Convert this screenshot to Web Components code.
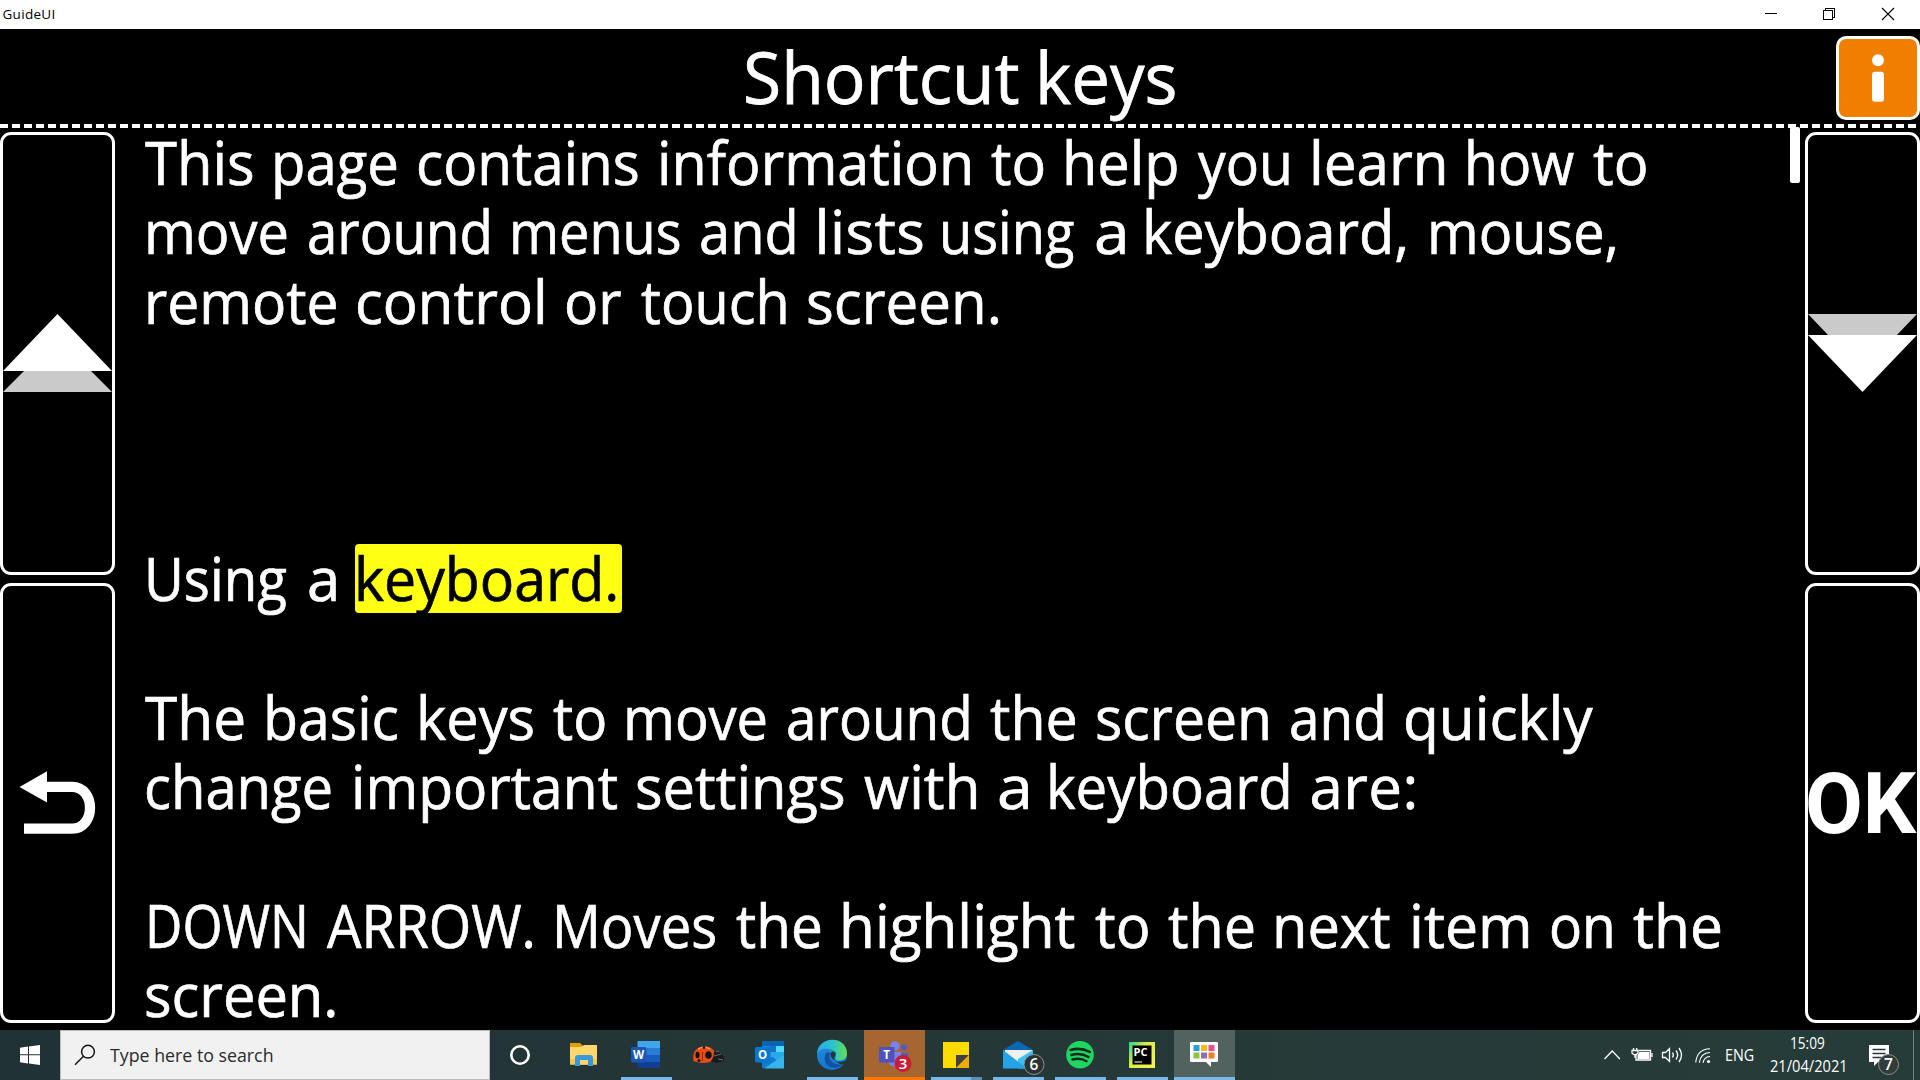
<!DOCTYPE html>
<html lang="en">
<head>
<meta charset="utf-8">
<title>GuideUI</title>
<style>
html,body{margin:0;height:100%;background:#000;overflow:hidden}
body{font-family:"Open Sans","Noto Sans",sans-serif}
</style>
</head>
<body>
<guide-app></guide-app>
<script>
const define=(name,html,setup)=>{
  const tpl=document.createElement('template');
  tpl.innerHTML=html;
  customElements.define(name,class extends HTMLElement{
    constructor(){super();this.attachShadow({mode:'open'}).append(tpl.content.cloneNode(true));}
    connectedCallback(){if(setup)setup(this,this.shadowRoot);}
  });
};

const ctx=document.createElement('canvas').getContext('2d');
/* Gives a span the wanted ink width: tracks it out, or condenses it when it is too wide. */
const fit=(span,text,w,cs)=>{
  ctx.font=`${cs.fontWeight} ${cs.fontSize} ${cs.fontFamily}`;
  const m=ctx.measureText(text),left=m.actualBoundingBoxLeft,ink=left+m.actualBoundingBoxRight;
  if(w>ink&&text.length>1){
    span.style.letterSpacing=(w-ink)/(text.length-1)+'px';
    span.style.marginLeft=left+'px';
  }else{
    const k=w/ink;
    span.style.transform=`scaleX(${k})`;
    span.style.transformOrigin='0 0';
    span.style.marginLeft=left*k+'px';
  }
};
define('fit-text',`<style>:host{display:block;flex:none;white-space:pre;font-variant-ligatures:none}span{display:inline-block}</style><span><slot></slot></span>`,(el,root)=>{
  const w=+el.getAttribute('w');
  el.style.width=w+'px';
  fit(root.querySelector('span'),el.textContent,w,getComputedStyle(el));
});

/* Space between two words: a base gap plus the side bearings of the letters that face it. */
const gap=(a,b)=>18+(/[nmuhdNl.,:]$/.test(a)?3.5:/[oescgp]$/.test(a)?2:1)+(/^[lhkmnrbpiDMU]/.test(b)?3.5:/^[aoecqsg]/.test(b)?1.8:.8);

/* A line of words on tab stops: "at" lists where each word starts and where the last one ends. */
define('word-line',`<style>:host{display:flex;height:69.333px;line-height:68px;white-space:pre;font-variant-ligatures:none}div{flex:none}span{display:inline-block}</style>`,(el,root)=>{
  const at=el.getAttribute('at').split(' ').map(Number),words=el.textContent.split(' '),cs=getComputedStyle(el);
  el.style.marginLeft=at[0]-145+'px';
  words.forEach((word,i)=>{
    const last=i===words.length-1,box=document.createElement('div'),span=document.createElement('span');
    box.style.width=at[i+1]-at[i]+'px';
    span.textContent=word;
    fit(span,word,at[i+1]-at[i]-(last?0:gap(word,words[i+1])),cs);
    box.append(span,last?'':' ');
    root.append(box);
  });
});

define('title-bar',`<style>
:host{display:flex;height:29px;flex:none;background:#fff;color:#000;align-items:center;justify-content:space-between;font-size:13.500px}
fit-text{margin-left:2.5px;line-height:29px}
div{display:flex;width:177px}svg{display:block;width:59px;height:29px}
</style><fit-text w="52">GuideUI</fit-text><div>
<svg viewBox="0 0 59 29" fill="none" stroke="#000" shape-rendering="crispEdges"><path d="M22 13.5h12"/></svg>
<svg viewBox="0 0 59 29" fill="none" stroke="#000" shape-rendering="crispEdges"><path d="M21.5 10.500h9v9h-9zM23.500 10V8.500h9v9H31"/></svg>
<svg viewBox="0 0 59 29" fill="none" stroke="#000" stroke-width="1.1"><path d="M21 8l12 12M33 8L21 20"/></svg></div>`);

define('info-button',`<style>:host{display:block;width:84px;height:84px;box-sizing:border-box;border:3px solid #fff;border-radius:10px;background:#f07f00}
svg{display:block;width:78px;height:78px}</style>
<svg viewBox="0 0 78 78" fill="#fff"><circle cx="39" cy="21.200" r="6"/><rect x="33" y="32.700" width="12" height="30" rx="3"/></svg>`);

define('page-header',`<style>:host{display:flex;flex:none;height:95px;color:#fff}
h1{margin:0;font-weight:400;font-size:72px;line-height:95px;padding-left:745.500px;-webkit-text-stroke:.8px #fff}
info-button{margin:7.300px 0 0 auto}</style><h1><word-line style="line-height:95px;height:95px" at="145 440.500 575">Shortcut keys</word-line></h1><info-button></info-button>`);

define('dash-rule',`<style>:host{display:block;flex:none;height:4px;background:repeating-linear-gradient(90deg,#fff 0 8px,#000 8px 12px)}</style>`);

define('nav-key',`<style>:host{display:flex;align-items:center;justify-content:center;box-sizing:border-box;border:3px solid #fff;border-radius:11px;overflow:hidden}
::slotted(svg){display:block;flex:none}</style><slot></slot>`);

define('key-column',`<style>:host{display:flex;flex:none;width:115px;flex-direction:column;gap:8px;padding:4px 0 7px;box-sizing:border-box}
#a{height:442.500px;flex:none}#b{flex:1}
.ok{font:700 84.500px/84px Roboto,sans-serif;color:#fff}</style><nav-key id="a"></nav-key><nav-key id="b"></nav-key>`,(el,root)=>{
  const left=el.getAttribute('side')==='left',a=root.getElementById('a'),b=root.getElementById('b');
  a.innerHTML=left?`<svg width="109" height="78" viewBox="0 0 109 78"><path fill="#cacaca" d="M0 78L21 57H88L109 78z"/><path fill="#fff" d="M0 57L54.500 0 109 57z"/></svg>`
    :`<svg width="109" height="78" viewBox="0 0 109 78"><path fill="#cacaca" d="M0 0H109L88 22H21z"/><path fill="#fff" d="M0 21H109L54.500 78z"/></svg>`;
  b.innerHTML=left?`<svg width="109" height="63" viewBox="3 771.700 109 63"><path fill="#fff" d="M19.500 787.700L47 772v31.300z"/><path d="M46 787.500H72C96 787.500 96 829.400 72 829.400H24" fill="none" stroke="#fff" stroke-width="10.300"/></svg>`
    :`<fit-text style="font:700 84.500px/84px Roboto,sans-serif;color:#fff;margin-top:4px" w="109.500">OK</fit-text>`;
});

define('mark-word',`<style>:host{display:block;box-sizing:border-box;width:267px;height:69.333px;padding-left:3.700px;border-radius:4px;background:#ffff14;color:#000;-webkit-text-stroke-color:#000}
fit-text{line-height:68px}</style><fit-text w="257">keyboard.</fit-text>`);

define('guide-text',`<style>:host{display:block;flex:1;min-height:0;padding-left:30px;font-size:60px;line-height:69.333px;color:#fff;-webkit-text-stroke:.7px #fff}
p{margin:0 0 69.333px}p.far{margin-bottom:208px}.r{display:flex;height:69.333px}
mark-word{margin-left:19.500px}</style>
<p class="far"><word-line at="145.3 276 418.400 660.400 991.400 1067 1198 1313.500 1468.600 1593.500 1646">This page contains information to help you learn how to</word-line>
<word-line at="149 308.600 513.500 701 819.600 943 1096 1147.300 1431.400 1615.500">move around menus and lists using a keyboard, mouse,</word-line>
<word-line at="149 358 567 641 808.600 998">remote control or touch screen.</word-line></p>
<p><span class="r"><word-line at="149 308.600 335.500">Using a</word-line><mark-word></mark-word></span></p>
<p><word-line at="145.300 267.300 420.400 553 627.800 787.500 990.500 1097.500 1290.500 1405.500 1593">The basic keys to move around the screen and quickly</word-line>
<word-line at="147 354.300 638 864 999 1050.500 1311.500 1414.500">change important settings with a keyboard are:</word-line></p>
<p><word-line at="149 326.500 557 736 843.700 1094.700 1168 1277 1413 1551.500 1633.500 1720.700">DOWN ARROW. Moves the highlight to the next item on the</word-line>
<word-line at="147 335">screen.</word-line></p>`);

define('scroll-thumb',`<style>:host{display:block;flex:none;width:10.500px;height:56px;margin:-1px 5px 0 0;border-radius:2px;background:#fff}</style>`);

define('task-button',`<style>:host{display:block;position:relative;flex:none;width:61px;height:50px;margin-right:1px}
:host([active]){background:#51625f}:host([alert]){background:#a56632}
:host([open])::after{content:"";position:absolute;left:5px;right:5px;bottom:0;height:3px;background:#76b9ed}
:host([active])::after{left:0;right:0}:host([alert])::after{left:0;right:0;background:#ff7600}
:host([stack])::after{background:linear-gradient(90deg,#76b9ed 40px,#5c8fb7 40px)}
::slotted(svg){display:block}</style><slot></slot>`);

define('search-box',`<style>:host{display:flex;box-sizing:border-box;width:430px;height:50px;background:#f1f1f1;border:1px solid #b9bcbc;font-size:18px;color:#2b2b2b;line-height:48px}
svg{width:22px;height:22px;margin:13px 14px 0 13px}</style>
<svg viewBox="0 0 22 22" fill="none" stroke="#111" stroke-width="1.500"><circle cx="14" cy="7.700" r="6.400"/><path d="M9.500 12.300L1 20.800"/></svg><fit-text w="162.500">Type here to search</fit-text>`);

define('tray-area',`<style>:host{display:flex;margin-left:auto;width:316px;height:50px;color:#fff;font-size:15.500px;flex:none}
svg{display:block;flex:none}.e{margin-left:6px;line-height:50px}.d{width:75px;margin-left:16px;display:flex;flex-direction:column;padding-top:2px;line-height:23px}
.d :first-child{margin-left:21px}</style>
<svg width="116" height="50" viewBox="1604 1030 116 50" fill="none" stroke="#fff" stroke-width="1.300">
<path d="M1604.500 1059l7.700-8 7.700 8"/>
<path d="M1638.500 1050.500H1650.500V1060H1636V1054"/><path d="M1639.500 1052H1649.500V1059H1637.500V1055.500z" fill="#fff" stroke="none"/><path d="M1652 1053v4M1632 1050.500h6v2.500q-3 3.500-6 0zM1633.500 1048v2.500M1636.700 1048v2.500M1635 1054v4"/>
<path d="M1662.500 1052.500h3l4-4v13l-4-4h-3zM1672.500 1052.500q1.700 2.500 0 5M1676 1050.500q3.300 4.500 0 9M1679 1048q5 7 0 14"/>
<path d="M1695.700 1062.500Q1697 1049 1710 1048.700M1699.300 1062.800Q1700.500 1053 1710 1052.500M1703 1062.800Q1704 1057 1710 1056.500" stroke-width="1.100"/><circle cx="1708.500" cy="1061.500" r="1.600" fill="#fff" stroke="none"/></svg>
<fit-text class="e" w="28">ENG</fit-text>
<div class="d"><fit-text w="34">15:09</fit-text><fit-text w="75">21/04/2021</fit-text></div>
<svg style="margin-left:19px" width="50" height="50" viewBox="1864 1030 50 50"><path fill="#fff" d="M1869 1045h20v17h-11l-4 4v-4h-5z"/><path d="M1872.500 1049.500h13M1872.500 1053.500h13M1872.500 1057.500h9" stroke="#273b39" stroke-width="1.300"/><circle cx="1888.500" cy="1064.500" r="10" fill="#343b3b" stroke="#87908f"/><text x="1888.500" y="1070" text-anchor="middle" font-size="15.500" font-weight="600" fill="#fff">7</text><path d="M1913.700 1030v50" stroke="#82908e"/></svg>`);

define('task-bar',`<style>:host{display:flex;flex:none;height:50px;background:linear-gradient(90deg,#203236,#243636 40%,#263b39 75%,#263c39);font-family:"Open Sans","Noto Sans",sans-serif}
.s{display:block;width:60px;height:50px}.apps{display:flex;margin-left:2px}svg{display:block}</style>
<svg class="s" viewBox="0 0 60 50" fill="#fff"><path d="M20 17.800l8-1.200V24.300h-8zM29 16.500l11-1.500v9.300H29zM20 25.300h8v8.200l-8-1.200zM29 25.300h11V35l-11-1.400z"/></svg>
<search-box></search-box><div class="apps">
<task-button><svg width="61" height="50"><circle cx="28" cy="25" r="8.700" fill="none" stroke="#fff" stroke-width="2.600"/></svg></task-button>
<task-button><svg width="61" height="50"><path d="M16 13h10l3 3v3H16z" fill="#dfa000"/><path d="M16 17h11l3-2h13v19.500H16z" fill="#ffd76b"/><path d="M16 29h27v5.500H16z" fill="#f7c64d"/><path d="M21 36v-8q0-3 3-3h12q3 0 3 3v8h-5v-6h-8v6z" fill="#3b96dc"/><path d="M26 30h8v4.500h-8z" fill="#ffd76b"/></svg></task-button>
<task-button open><svg width="61" height="50"><path d="M21.500 11H44v7H21.500z" fill="#41a5ee"/><path d="M21.500 18H44v7H21.500z" fill="#2b7cd3"/><path d="M21.500 25H44v7H21.500z" fill="#185abd"/><path d="M21.500 32H44v6H21.500z" fill="#103f91"/><rect x="15" y="17" width="15.500" height="15.500" rx="1.500" fill="#1b56b5"/><text x="22.500" y="29" text-anchor="middle" font-size="11.500" font-weight="700" fill="#fff">W</text></svg></task-button>
<task-button><svg width="61" height="50"><path d="M33 31q0-9 7-10l5 5q3 5-1 6l-6 1z" fill="#181b1b"/><path d="M38 22l3-1M36 26l7-2M40 29l5 1" stroke="#6b7170" fill="none"/><path d="M15.300 31Q14 21 21 17.500Q30 14 36 20.500Q36.500 28 32 32Q24 34.500 15.300 31z" fill="#e64f10"/><path d="M20 19q6-3.500 12 0" fill="none" stroke="#ff9b6b" stroke-width="1.200"/><ellipse cx="19.500" cy="25" rx="2" ry="3.200" fill="#111"/><ellipse cx="30.500" cy="25" rx="3.200" ry="3.800" fill="#111"/><path d="M24.500 22v9" stroke="#8b2c08"/><circle cx="26" cy="17.500" r="1.300" fill="#26100a"/><circle cx="21" cy="30.500" r="1.500" fill="#111"/></svg></task-button>
<task-button><svg width="61" height="50"><path d="M22 11h22v27H22z" fill="#1490df"/><path d="M22 11h22v5H22z" fill="#0a64b4"/><path d="M29 16h7v9h-7z" fill="#1473c9"/><path d="M36 16h8v6h-8z" fill="#50d9ff"/><path d="M29 22h15v8H29z" fill="#28a8ea"/><path d="M22 30l11-3 11 11H22z" fill="#0f7bd5"/><path d="M44 25L24 38.500h20z" fill="#35b4ec"/><rect x="15" y="17" width="15.500" height="15.500" rx="1.500" fill="#0878cf"/><text x="22.700" y="29" text-anchor="middle" font-size="11.500" font-weight="700" fill="#fff">O</text></svg></task-button>
<task-button open><svg width="61" height="50"><defs><linearGradient id="g"><stop stop-color="#29a9ef"/><stop offset=".55" stop-color="#2cc4c9"/><stop offset="1" stop-color="#67df49"/></linearGradient><linearGradient id="h" x2="0" y2="1"><stop stop-color="#1f90dd"/><stop offset="1" stop-color="#1675cf"/></linearGradient></defs><circle cx="30" cy="25" r="15" fill="url(#h)"/><path d="M15 24C16 5 45 5 45 23.500C45 32 33 32 33 28.500C35 26 35 21 29 19.500C23 18 17 19 15 24z" fill="url(#g)"/><path d="M25 22q-5 6 0 13q8 6 17 -1q-7 2-12-2q-4-4-2-9z" fill="#12519f"/><path d="M28.500 23q3-3 5 0q.5 2-1 4q-1 2 2 3.500q-6-.5-6-7.500z" fill="#243636"/><path d="M34 31.200q6 1.500 9.500-1l2 1-1.500 3.500q-7 0-10-3.500z" fill="#243636"/></svg></task-button>
<task-button open alert><svg width="61" height="50"><circle cx="31" cy="16" r="4.700" fill="#7b83eb"/><circle cx="40" cy="17.500" r="3" fill="#505ac9"/><path d="M34 23h10v8q-1 5-7 5z" fill="#505ac9"/><path d="M24 22h13v12q-5 6-12 0z" fill="#7b83eb"/><rect x="15" y="17" width="15.500" height="15.500" rx="1" fill="#4b53bc"/><text x="22.500" y="29" text-anchor="middle" font-size="11.500" font-weight="700" fill="#fff">T</text><circle cx="39" cy="33.500" r="8.500" fill="#c91c36"/><text x="39" y="39" text-anchor="middle" font-size="15" font-weight="600" fill="#fff">3</text></svg></task-button>
<task-button open stack><svg width="61" height="50"><path d="M17 12h26v13l-13 13H17z" fill="#ffdc00"/><path d="M30 25h13L30 38z" fill="#404040"/><path d="M43 25v13H30z" fill="#f0ad00"/></svg></task-button>
<task-button open><svg width="61" height="50"><path d="M15 20l15-9 15 9v5H15z" fill="#0a67b3"/><path d="M17 20h27v12H17z" fill="#f0f0f0"/><path d="M45 20L30 29v9.500H45z" fill="#35c4f5"/><path d="M15 20l24 18.500H15z" fill="#25a3e5"/><circle cx="46" cy="34.500" r="10" fill="#293333" stroke="#8a9393"/><text x="46" y="40" text-anchor="middle" font-size="15.500" font-weight="600" fill="#fff">6</text></svg></task-button>
<task-button open><svg width="61" height="50"><circle cx="30" cy="24.700" r="13.800" fill="#1ed760"/><path d="M20.500 20q10-3 19.500 2M21.500 25q9-2.500 17 2M22.500 29.500q8-2 14 1.700" fill="none" stroke="#142820" stroke-width="2.500" stroke-linecap="round"/></svg></task-button>
<task-button open><svg width="61" height="50"><defs><linearGradient id="p" x2="1" y2=".7"><stop stop-color="#20d390"/><stop offset=".45" stop-color="#d5ed4c"/><stop offset="1" stop-color="#f5f14b"/></linearGradient></defs><rect x="17" y="12" width="26" height="26" fill="url(#p)"/><rect x="20.500" y="15.500" width="19" height="19" fill="#000"/><text x="21.500" y="25.500" font-size="11" font-weight="700" fill="#fff" textLength="14" lengthAdjust="spacingAndGlyphs">PC</text><path d="M22.500 32h7.500" stroke="#ccc" stroke-width="1.300"/></svg></task-button>
<task-button open active><svg width="61" height="50"><path d="M17 12h26q1 0 1 1v18q0 1-1 1h-6v5l-5-5H17q-1 0-1-1V13q0-1 1-1z" fill="#fff"/><path d="M19.500 15h6v6h-6z" fill="#25a0da"/><path d="M27 15h6v6h-6z" fill="#fcb913"/><path d="M34.500 15h6v6h-6z" fill="#ef4d91"/><path d="M19.500 22.500h6v6h-6z" fill="#8bc53f"/><path d="M27 22.500h6v6h-6z" fill="#946cb4"/><path d="M34.500 22.500h6v6h-6z" fill="#f47b20"/></svg></task-button>
</div><tray-area></tray-area>`);

define('guide-app',`<style>:host{display:flex;flex-direction:column;width:1920px;height:1080px;background:#000}
main{flex:1;display:flex;min-height:0}</style>
<title-bar></title-bar><page-header></page-header><dash-rule></dash-rule>
<main><key-column side="left"></key-column><guide-text></guide-text><scroll-thumb></scroll-thumb><key-column side="right"></key-column></main>
<task-bar></task-bar>`);
</script>
</body>
</html>
